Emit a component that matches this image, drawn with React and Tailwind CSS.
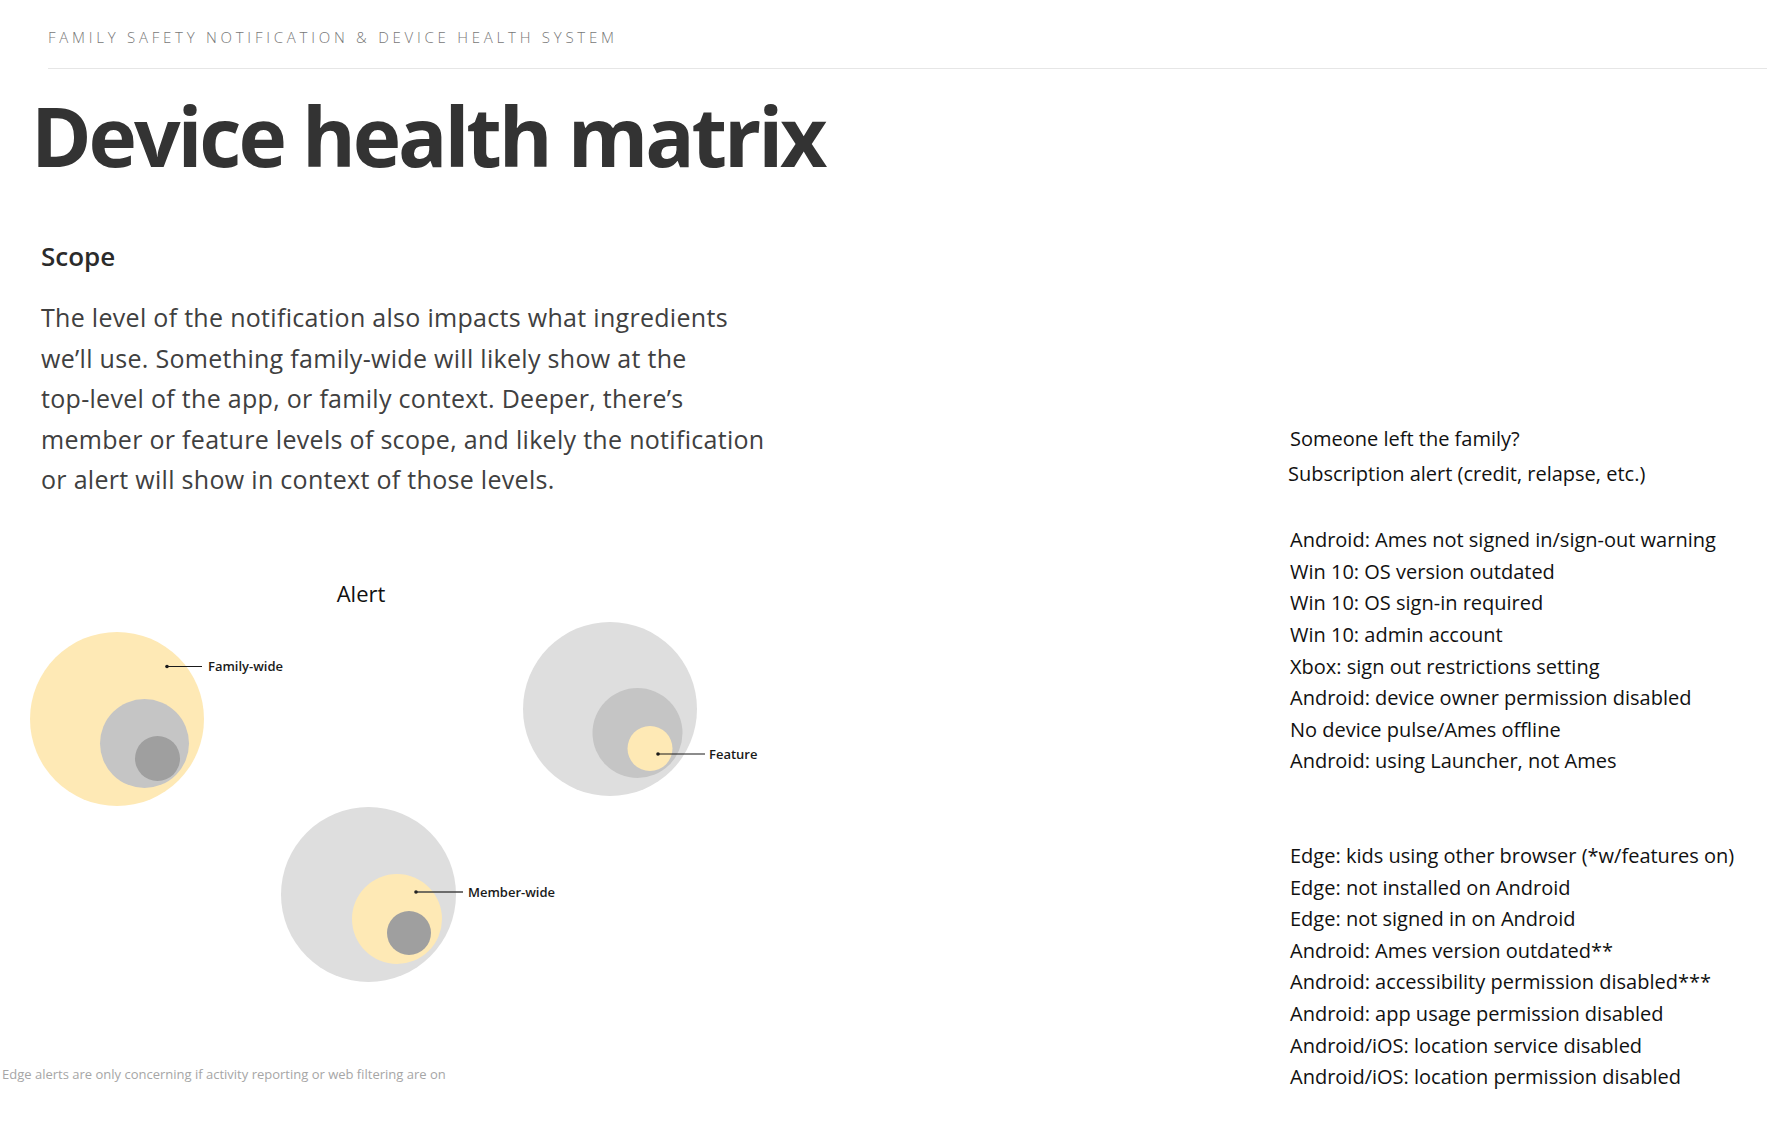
import React from 'react';

// 右侧健康问题列表
const groups = [
  ['Android: Ames not signed in/sign-out warning', 'Win 10: OS version outdated', 'Win 10: OS sign-in required', 'Win 10: admin account', 'Xbox: sign out restrictions setting', 'Android: device owner permission disabled', 'No device pulse/Ames offline', 'Android: using Launcher, not Ames'],
  ['Edge: kids using other browser (*w/features on)', 'Edge: not installed on Android', 'Edge: not signed in on Android', 'Android: Ames version outdated**', 'Android: accessibility permission disabled***', 'Android: app usage permission disabled', 'Android/iOS: location service disabled', 'Android/iOS: location permission disabled'],
];

const YELLOW = '#fee9b5';
const LIGHT = '#dedede';
const MID = '#c5c5c5';
const DARK = '#9f9f9f';

// 圆形嵌套图 — 三组，坐标相对画布
const Circles = () => (
  <svg width="800" height="495" className="absolute left-0 top-0">
    {/* family-wide */}
    <circle cx="117" cy="150" r="87" fill={YELLOW} />
    <circle cx="144.5" cy="174.5" r="44.5" fill={MID} />
    <circle cx="157.5" cy="189.5" r="22.5" fill={DARK} />
    <line x1="167" y1="97.5" x2="202" y2="97.5" stroke="#1a1a1a" strokeWidth="1.2" />
    <circle cx="167" cy="97.5" r="1.8" fill="#1a1a1a" />
    {/* feature */}
    <circle cx="610" cy="140" r="87" fill={LIGHT} />
    <circle cx="637.5" cy="164" r="45" fill={MID} />
    <circle cx="650" cy="179.5" r="22.5" fill={YELLOW} />
    <line x1="658" y1="185" x2="705" y2="185" stroke="#1a1a1a" strokeWidth="1.2" />
    <circle cx="658" cy="185" r="1.8" fill="#1a1a1a" />
    {/* member-wide */}
    <circle cx="368.5" cy="325.5" r="87.5" fill={LIGHT} />
    <circle cx="397" cy="350" r="45" fill={YELLOW} />
    <circle cx="409" cy="364" r="22" fill={DARK} />
    <line x1="416" y1="323" x2="463" y2="323" stroke="#444" strokeWidth="1.4" />
    <circle cx="416" cy="323" r="1.8" fill="#222" />
  </svg>
);

const Label = ({ className, children }) => (
  <span className={`absolute text-[13px] leading-[18px] font-semibold text-[#1a1a1a] whitespace-nowrap ${className}`}>{children}</span>
);

export default function App() {
  return (
    <div className="min-h-screen bg-white font-['Open_Sans',sans-serif] text-[#333]">
      {/* 顶部 */}
      <div className="pl-[48px] pt-[27px]">
        <div className="text-[15px] leading-[20px] font-light tracking-[0.25em] text-[#777] whitespace-nowrap">
          FAMILY SAFETY NOTIFICATION &amp; DEVICE HEALTH SYSTEM
        </div>
        <div className="mt-[21px] h-px bg-[#e6e6e6]" />
      </div>

      <h1 className="mt-[25px] pl-[31px] text-[82px] leading-none font-bold text-[#333] tracking-[-0.038em] whitespace-nowrap">
        Device health matrix
      </h1>

      <div className="flex items-start mt-[64px]">
        {/* 左栏 */}
        <div className="w-[1288px] shrink-0">
          <h2 className="ml-[41px] text-[26px] leading-[32px] font-semibold text-[#2b2b2b]">Scope</h2>
          <p className="ml-[41px] mt-[25px] text-[25px] leading-[40.5px] tracking-[0.012em] text-[#404040] whitespace-nowrap">
            The level of the notification also impacts what ingredients<br />
            we’ll use. Something family-wide will likely show at the<br />
            top-level of the app, or family context. Deeper, there’s<br />
            member or feature levels of scope, and likely the notification<br />
            or alert will show in context of those levels.
          </p>

          <div className="relative mt-[69px] h-[495px] w-[800px]">
            <Circles />
            <span className="absolute left-[311px] top-[10px] w-[100px] text-center text-[22px] leading-[28px] font-medium text-[#111]">Alert</span>
            <Label className="left-[208px] top-[88px]">Family-wide</Label>
            <Label className="left-[709px] top-[176px]">Feature</Label>
            <Label className="left-[468px] top-[314px]">Member-wide</Label>
          </div>

          <p className="ml-[2px] text-[13px] leading-[20px] text-[#a6a6a6] whitespace-nowrap">
            Edge alerts are only concerning if activity reporting or web filtering are on
          </p>
        </div>

        {/* 右栏 */}
        <div className="pt-[183px] text-[20px] leading-[31.6px] font-medium text-[#111] whitespace-nowrap">
          <div className="ml-[2px] mb-[3px]">Someone left the family?</div>
          <div className="mb-[35px]">Subscription alert (credit, relapse, etc.)</div>
          {groups.map((g, gi) => (
            <div key={gi} className={gi > 0 ? 'mt-[63px] ml-[2px]' : 'ml-[2px]'}>
              {g.map(t => <div key={t}>{t}</div>)}
            </div>
          ))}
        </div>
      </div>
    </div>
  );
}
